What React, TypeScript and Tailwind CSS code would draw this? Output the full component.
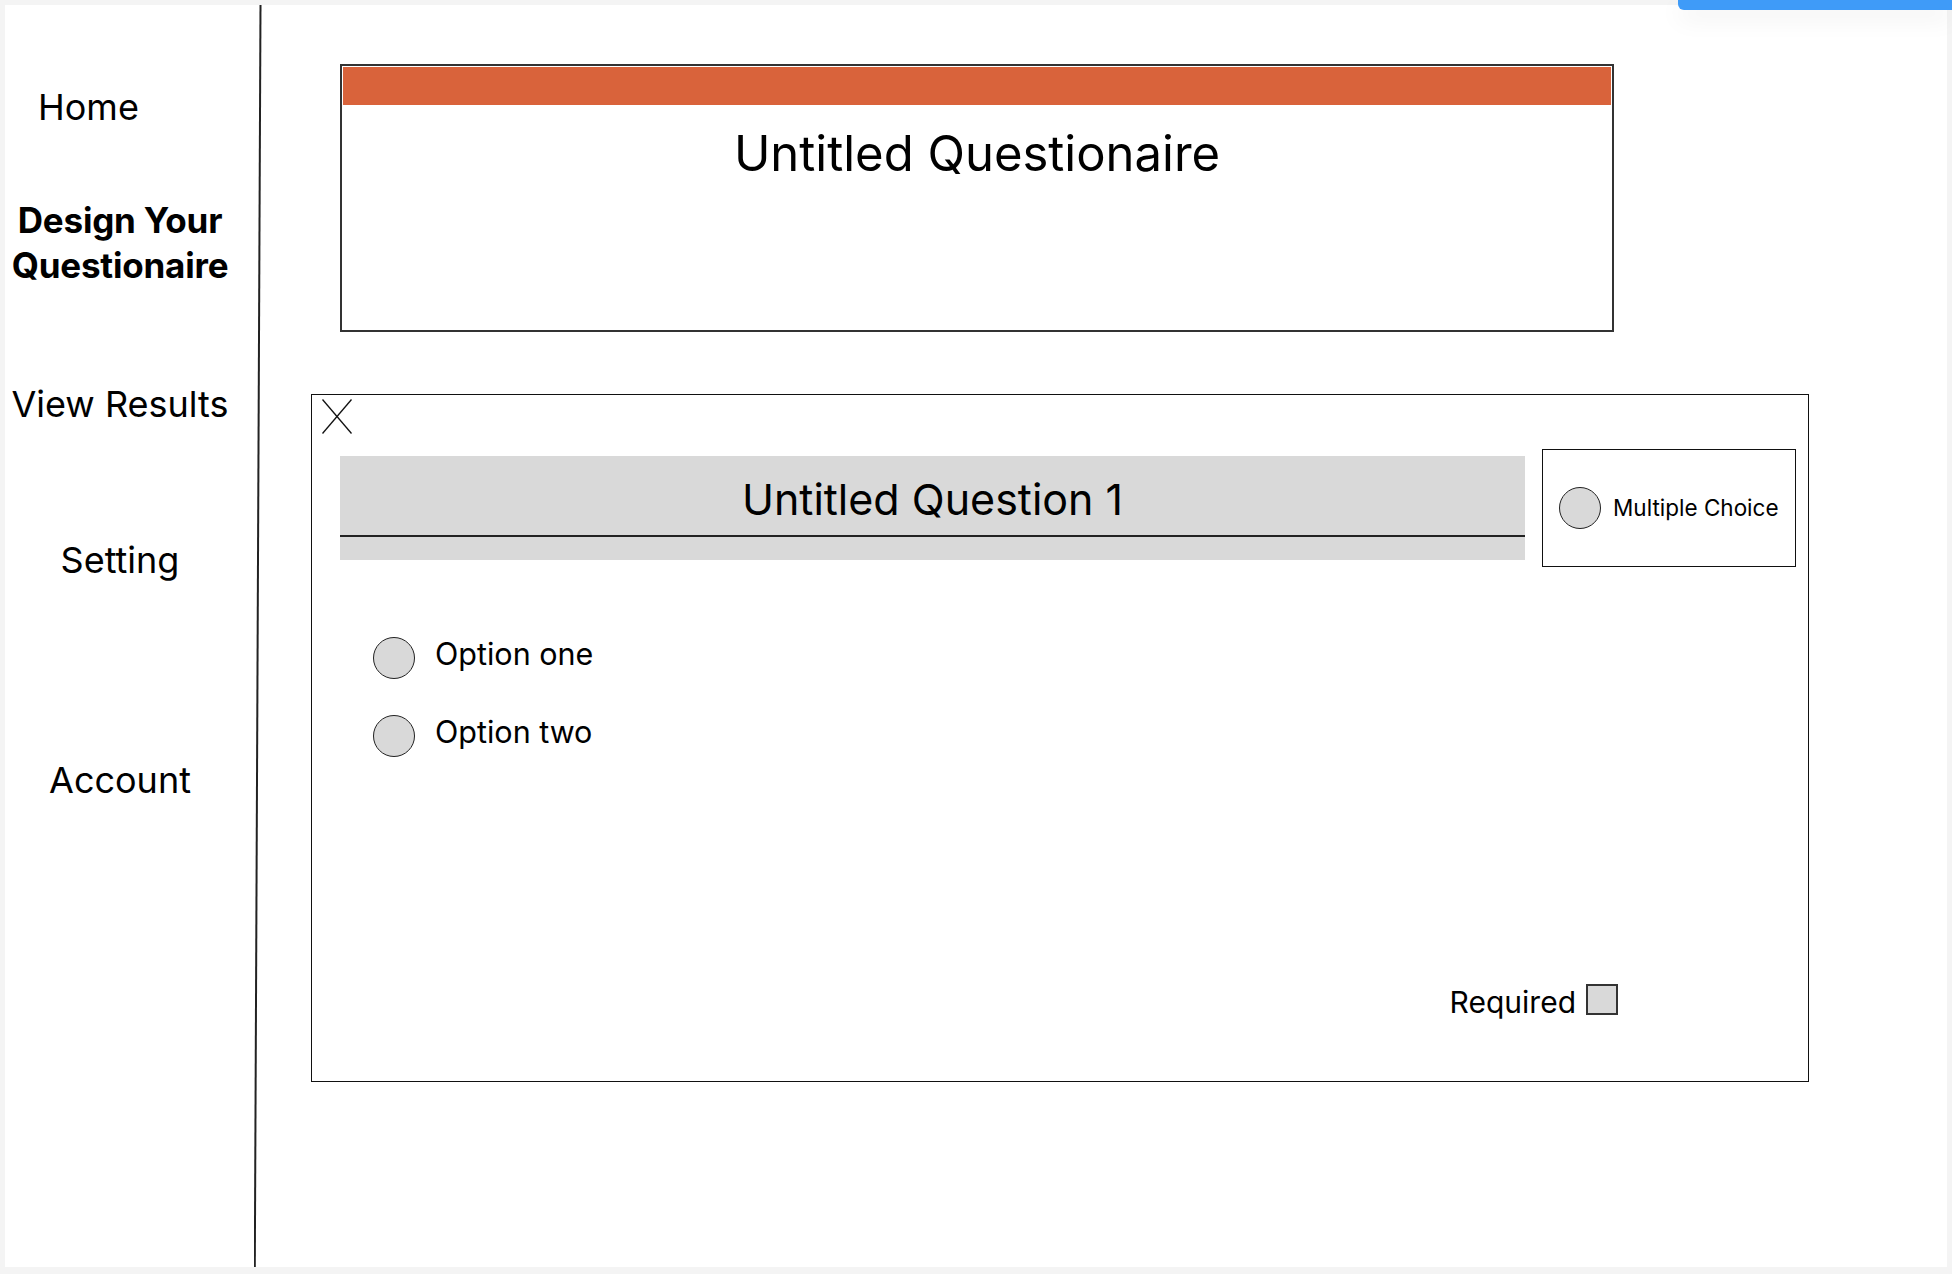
import React from 'react';

const navItems = [
  { label: 'View Results', className: 'mt-[98px]' },
  { label: 'Setting', className: 'mt-[120px]' },
  { label: 'Account', className: 'mt-[184px]' },
];

const options = ['Option one', 'Option two'];

const Radio: React.FC = () => (
  <span className="block w-[42px] h-[42px] shrink-0 rounded-full bg-[#d9d9d9] border-[1.5px] border-[#222]" />
);

const CloseIcon: React.FC = () => (
  <svg width="30" height="35" viewBox="0 0 30 35" className="block">
    <line x1="0.5" y1="0.5" x2="29.5" y2="34.5" stroke="#111" strokeWidth="1.3" />
    <line x1="29.5" y1="0.5" x2="0.5" y2="34.5" stroke="#111" strokeWidth="1.3" />
  </svg>
);

export default function App() {
  return (
    <div className="relative w-full min-h-[1274px] bg-[#f4f4f4] pt-[5px] pl-[5px] pr-[5px] font-[Inter,sans-serif] text-black">
      {/* top-right tab */}
      <div className="absolute top-0 right-0 w-[274px] h-[10px] bg-[#3f9bf8] rounded-bl-[6px] shadow-[0_8px_24px_rgba(0,0,0,0.08)]" />

      <div className="flex h-[1262px] bg-white">
        {/* sidebar */}
        <nav className="w-[249px] shrink-0 pt-[84px] pr-[19px]">
          <div className="pl-[33px] text-[36px] leading-none">Home</div>
          <div className="mt-[73px] text-center text-[35px] leading-[45px] font-bold tracking-[-0.2px]">
            Design Your
            <br />
            Questionaire
          </div>
          {navItems.map((item) => (
            <div key={item.label} className={`${item.className} text-center text-[36px] leading-none`}>
              {item.label}
            </div>
          ))}
        </nav>

        <div className="relative w-[8px] shrink-0 self-stretch">
          <svg className="absolute inset-0 w-full h-full" viewBox="0 0 8 1262" preserveAspectRatio="none">
            <line x1="6.5" y1="0" x2="0.8" y2="1262" stroke="#222" strokeWidth="2" vectorEffect="non-scaling-stroke" />
          </svg>
        </div>

        {/* main */}
        <main className="flex-1">
          <section className="ml-[78px] mt-[59px] w-[1274px] h-[268px] border-2 border-[#333] px-[1px]">
            <div className="mt-[1px] h-[38px] bg-[#d9633b]" />
            <h1 className="mt-[24px] text-center text-[49px] leading-none font-normal">
              Untitled Questionaire
            </h1>
          </section>

          <section className="ml-[49px] mt-[62px] w-[1498px] h-[688px] border-[1.5px] border-[#111] flex flex-col">
            <div className="ml-[10px] mt-[4px]">
              <CloseIcon />
            </div>

            <div className="mt-[15px] ml-[28px] flex items-center">
              <div className="w-[1185px] h-[104px] bg-[#d9d9d9] pt-[22px]">
                <h2 className="text-center text-[43px] leading-none font-normal">Untitled Question 1</h2>
                <div className="mt-[14px] h-[1.5px] bg-[#222]" />
              </div>
              <div className="ml-[17px] w-[254px] h-[118px] border-[1.5px] border-[#111] flex items-center pl-[16px] gap-[12px]">
                <Radio />
                <span className="text-[22.5px] leading-none">Multiple Choice</span>
              </div>
            </div>

            <div className="mt-[70px] ml-[61px] flex flex-col gap-[36px]">
              {options.map((opt) => (
                <label key={opt} className="flex items-start gap-[20px]">
                  <Radio />
                  <span className="mt-[2px] text-[30.5px] leading-none">{opt}</span>
                </label>
              ))}
            </div>

            <div className="mt-[227px] mr-[190px] flex justify-end items-start gap-[10px]">
              <span className="mt-[3px] text-[30px] leading-none">Required</span>
              <span className="block w-[32px] h-[31px] bg-[#d9d9d9] border-2 border-[#333]" />
            </div>
          </section>
        </main>
      </div>
    </div>
  );
}
